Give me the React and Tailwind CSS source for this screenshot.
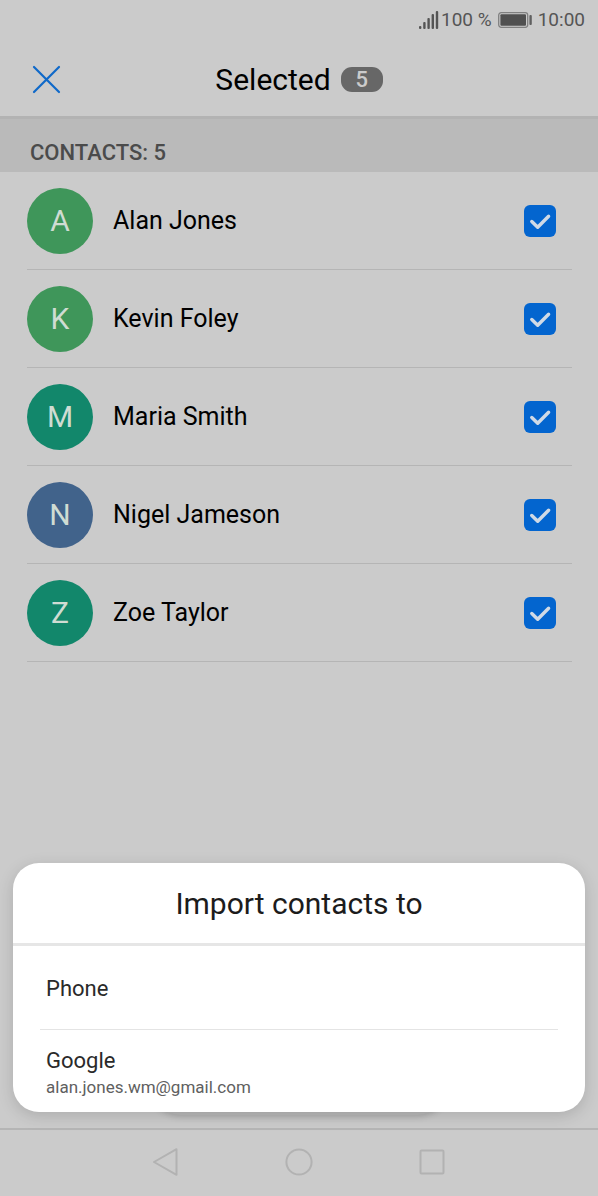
import React, { useState } from "react";

const contacts = [
  { name: "Alan Jones", color: "bg-[#3f965a]" },
  { name: "Kevin Foley", color: "bg-[#3f965a]" },
  { name: "Maria Smith", color: "bg-[#12876b]" },
  { name: "Nigel Jameson", color: "bg-[#41638b]" },
  { name: "Zoe Taylor", color: "bg-[#12876b]" },
];

const StatusBar = () => (
  <div className="flex h-10 items-center justify-end pr-[13px] text-[19px] text-[#555555]">
    <svg width="20" height="18" viewBox="0 0 20 18" fill="#555555" className="mr-[2px]">
      <rect x="0" y="15" width="2.4" height="3" rx="1" />
      <rect x="4.2" y="11" width="2.4" height="7" rx="1" />
      <rect x="8.4" y="7" width="2.4" height="11" rx="1" />
      <rect x="12.6" y="3" width="2.4" height="15" rx="1" />
      <rect x="16.8" y="0" width="2.4" height="18" rx="1" />
    </svg>
    <span>100 %</span>
    <svg width="34" height="16" viewBox="0 0 34 16" className="mr-[6px] ml-[6px]">
      <rect x="0.7" y="0.7" width="29" height="14.6" rx="2.5" fill="none" stroke="#808080" strokeWidth="1.3" />
      <rect x="2.4" y="2.2" width="25.6" height="11.6" rx="1" fill="#505050" />
      <rect x="31.4" y="3" width="2.4" height="10" rx="1" fill="#606060" />
    </svg>
    <span>10:00</span>
  </div>
);

const Header = ({ count }) => (
  <header className="grid h-[76px] grid-cols-[1fr_auto_1fr] items-center px-8 pt-[2px]">
    <button type="button" aria-label="Close" className="justify-self-start">
      <svg width="29" height="29" viewBox="0 0 29 29" fill="none" stroke="#0f69c9" strokeWidth="2.2" strokeLinecap="round">
        <path d="M2 2 27 27M27 2 2 27" />
      </svg>
    </button>
    <h1 className="flex items-center gap-[10px] text-[30px] text-black">
      Selected
      <span className="flex h-[25px] w-[42px] items-center justify-center rounded-[11px] bg-[#676767] text-[22px] font-medium text-[#cbcbcb]">
        {count}
      </span>
    </h1>
  </header>
);

const ContactRow = ({ contact, checked, onToggle }) => (
  <li className="mr-[26px] ml-[27px] border-b border-[#b5b5b5]">
    <label className="flex h-[97px] items-center pr-4">
      <span
        aria-hidden="true"
        className={`flex size-[66px] items-center justify-center rounded-full text-[30px] text-[#cfdcd3] ${contact.color}`}
      >
        {contact.name[0]}
      </span>
      <span className="ml-5 flex-1 text-[25px] text-black">{contact.name}</span>
      <span className="grid size-8">
        <input
          type="checkbox"
          checked={checked}
          onChange={onToggle}
          className="peer col-start-1 row-start-1 size-8 appearance-none rounded-md border-2 border-[#808080] checked:border-0 checked:bg-[#0365cf]"
        />
        <svg
          viewBox="0 0 32 32"
          fill="none"
          stroke="#d0dae6"
          strokeWidth="3.4"
          strokeLinecap="round"
          strokeLinejoin="round"
          className="pointer-events-none invisible col-start-1 row-start-1 size-8 peer-checked:visible"
        >
          <path d="M7.8 16.5 13.7 22.3 24.6 11.2" />
        </svg>
      </span>
    </label>
  </li>
);

const ImportSheet = () => (
  <div
    role="dialog"
    aria-labelledby="import-title"
    className="absolute inset-x-[13px] bottom-[84px] overflow-hidden rounded-[26px] bg-white shadow-[0_4px_16px_rgba(0,0,0,0.15)]"
  >
    <h2
      id="import-title"
      className="flex h-[83px] items-center justify-center border-b-3 border-[#e6e6e6] text-[30px] text-[#1c1c1c]"
    >
      Import contacts to
    </h2>
    <div className="px-[27px]">
      <button
        type="button"
        className="flex h-[84px] w-full items-center border-b border-[#e4e4e4] px-[6px] pt-[2px] text-[22px] text-[#2a2a2a]"
      >
        Phone
      </button>
      <button type="button" className="flex h-[82px] w-full flex-col items-start justify-end px-[6px] pb-[13px] text-left">
        <span className="text-[22px] leading-7 text-[#2a2a2a]">Google</span>
        <span className="text-[17px] leading-6 text-[#606060]">alan.jones.wm@gmail.com</span>
      </button>
    </div>
  </div>
);

const NavBar = () => (
  <nav className="flex h-[68px] items-center justify-center gap-[105px] border-t-2 border-[#b5b5b5] bg-[#cbcbcb] pb-[2px]">
    <button type="button" aria-label="Back">
      <svg width="28" height="28" viewBox="0 0 28 28" fill="none" stroke="#b2b2b2" strokeWidth="2" strokeLinejoin="round">
        <path d="M24.5 1.2V26.8L2 14Z" />
      </svg>
    </button>
    <button type="button" aria-label="Home">
      <svg width="28" height="28" viewBox="0 0 28 28" fill="none" stroke="#b2b2b2" strokeWidth="2">
        <circle cx="14" cy="14" r="12.6" />
      </svg>
    </button>
    <button type="button" aria-label="Recent apps">
      <svg width="28" height="28" viewBox="0 0 28 28" fill="none" stroke="#b2b2b2" strokeWidth="2">
        <rect x="2.5" y="2.5" width="23" height="23" rx="1" />
      </svg>
    </button>
  </nav>
);

const App = () => {
  const [selected, setSelected] = useState(contacts.map((c) => c.name));

  const toggle = (name) => {
    setSelected((prev) =>
      prev.includes(name) ? prev.filter((n) => n !== name) : [...prev, name]
    );
  };

  return (
    <div className="relative flex min-h-screen flex-col bg-[#cbcbcb] font-[Roboto,sans-serif]">
      <StatusBar />
      <Header count={selected.length} />
      <main className="flex flex-1 flex-col">
        <h2 className="flex h-14 items-end border-t-3 border-[#b3b3b3] bg-[#bababa] pb-[3px] pl-[30px] text-[22px] font-medium text-[#4b4b4b]">
          CONTACTS: {contacts.length}
        </h2>
        <ul>
          {contacts.map((contact) => (
            <ContactRow
              key={contact.name}
              contact={contact}
              checked={selected.includes(contact.name)}
              onToggle={() => toggle(contact.name)}
            />
          ))}
        </ul>
        <div className="mx-auto mt-auto mb-[13px] h-16 w-[300px] rounded-[32px] bg-[#bababa] shadow-[0_2px_6px_rgba(0,0,0,0.15)]" />
      </main>
      <NavBar />
      <ImportSheet />
    </div>
  );
};

export default App;
